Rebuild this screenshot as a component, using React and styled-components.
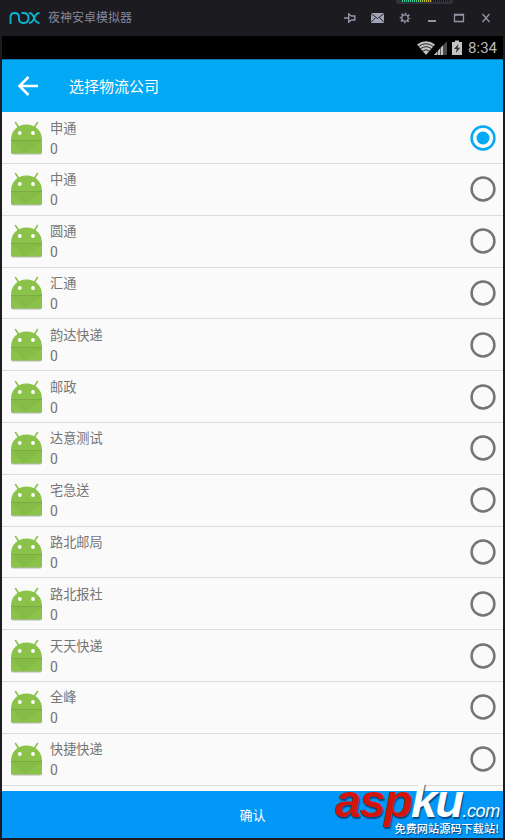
import React, { useState } from 'react';
import styled, { createGlobalStyle } from 'styled-components';

const companies = [
  '申通',
  '中通',
  '圆通',
  '汇通',
  '韵达快递',
  '邮政',
  '达意测试',
  '宅急送',
  '路北邮局',
  '路北报社',
  '天天快递',
  '全峰',
  '快捷快递',
];

const GlobalStyle = createGlobalStyle`
  body {
    margin: 0;
    background: #1c1b20;
    font-family: Roboto, "Noto Sans CJK SC", sans-serif;
  }

  * {
    box-sizing: border-box;
  }
`;

const Window = styled.div`
  position: relative;
  display: flex;
  flex-direction: column;
  width: 505px;
  height: 840px;
  padding: 0 2px 2px;
  overflow: hidden;
  background: #1c1b20;
`;

const TitleBar = styled.header`
  display: flex;
  align-items: center;
  flex: 0 0 36px;
  padding: 0 8px 0 7px;
`;

const WindowTitle = styled.span`
  flex: 1;
  margin-left: 8px;
  color: #85879a;
  font-size: 12px;
  line-height: 18px;
`;

const WindowButtons = styled.div`
  display: grid;
  grid-template-columns: 27px 28px 27px 27px 27px 15px;
  width: 151px;

  svg {
    display: block;
  }
`;

const Meter = styled.div`
  position: absolute;
  top: 0;
  left: 396px;
  width: 57px;
  height: 4px;
  border-radius: 0 0 3px 3px;
  background: #30333e;
`;

const MeterScale = styled.svg`
  display: block;
  margin-left: 6px;
`;

const StatusBar = styled.div`
  display: flex;
  align-items: center;
  justify-content: flex-end;
  flex: 0 0 23px;
  padding-right: 6px;
  background: #000;
`;

const Clock = styled.span`
  margin-left: 5px;
  padding-top: 2px;
  color: #b8b8b8;
  font-size: 15px;
  line-height: 21px;
`;

const AppBar = styled.div`
  display: flex;
  align-items: center;
  flex: 0 0 53px;
  padding-left: 15px;
  border-top: 1px solid #0879ae;
  background: #03a9f4;
`;

const AppTitle = styled.h1`
  margin: 1px 0 0 30px;
  color: #fff;
  font-size: 15px;
  font-weight: 400;
  line-height: 22px;
`;

const List = styled.ul`
  flex: 1;
  margin: 0;
  padding: 0.3px 0 0;
  overflow: hidden;
  background: #fafafa;
  list-style: none;
`;

const Row = styled.li`
  display: flex;
  align-items: center;
  height: 51.8px;
  padding: 0 7.5px 0 9px;
  border-bottom: 1px solid #dcdcdc;
`;

const RowText = styled.div`
  flex: 1;
  margin-left: 8px;
  padding-top: 2px;
  color: #757575;
  font-size: 13.2px;
  line-height: 21px;
`;

const Count = styled.div`
  font-size: 14px;
`;

const Radio = styled.button`
  display: flex;
  padding: 0;
  border: 0;
  background: none;
  color: ${({ $checked }) => ($checked ? '#03a9f4' : '#757575')};
`;

const ConfirmButton = styled.button`
  flex: 0 0 47px;
  padding: 0;
  border: 0;
  background: #0398f8;
  color: #fff;
  font-family: inherit;
  font-size: 13px;
`;

const Watermark = styled.div`
  position: absolute;
  right: 5px;
  bottom: 5px;
  width: 165px;
  height: 53px;
  color: #fff;
  white-space: nowrap;
`;

const Brand = styled.div`
  display: flex;
  align-items: baseline;
  height: 38px;
  font-family: "Liberation Sans", sans-serif;
  font-size: 47px;
  font-style: italic;
  font-weight: 700;
  line-height: 38px;
  letter-spacing: -1.7px;
  text-shadow: 1px 2px 1px rgba(0, 35, 75, 0.65);
`;

const BrandRed = styled.span`
  color: #d2140b;
`;

const BrandDomain = styled.span`
  font-size: 18px;
  font-weight: 400;
  letter-spacing: -0.4px;
`;

const Slogan = styled.div`
  position: absolute;
  right: 1px;
  bottom: 0;
  font-family: "Noto Sans CJK SC", sans-serif;
  font-size: 11.2px;
  font-weight: 500;
  line-height: 14px;
  text-shadow: 1px 1px 1px rgba(0, 35, 75, 0.75);
`;

function NoxLogo() {
  return (
    <svg width="31" height="12" viewBox="0 0 31 12" fill="none" stroke="#08b5cd" strokeWidth="1.9">
      <path d="M1.500 12V5.500C1.500 2.500 3 1 5.500 1S10 2.500 10 5.500V7c0 2.500 1.600 4 4 4h.6c3 0 4.900-2 4.900-5s-2-5-4.900-5H12.500" />
      <path d="M20 1c3 0 4 1.500 5.200 5S27.500 11 30.500 11M30.500 1c-3 0-4 1.500-5.300 5S23 11 20 11" />
    </svg>
  );
}

function PinIcon() {
  return (
    <svg width="12" height="12" viewBox="0 0 12 12" fill="none" stroke="#9295a8" strokeWidth="1.4">
      <path d="M0 6h4M4.700 1v10M4.700 2l2.800 2h3.300v4H7.500l-2.800 2" />
    </svg>
  );
}

function MailIcon() {
  return (
    <svg width="13" height="12" viewBox="0 0 13 12">
      <path fill="#a0a3b5" d="M0 1h13v10H0z" />
      <path fill="none" stroke="#292932" d="M0 1.500l6.500 5 6.500-5M0 10.500l4.500-5M13 10.500l-4.500-5" />
    </svg>
  );
}

function GearIcon() {
  return (
    <svg width="12" height="12" viewBox="0 0 12 12" fill="none" stroke="#9295a8">
      <circle cx="6" cy="6" r="3.200" strokeWidth="1.300" />
      <circle cx="6" cy="6" r="4.500" strokeWidth="1.700" strokeDasharray="1.600 1.934" strokeDashoffset="0.800" />
    </svg>
  );
}

function ControlIcon({ d, thin }) {
  return (
    <svg width="12" height="12" viewBox="0 0 12 12" fill="none" stroke="#9295a8" strokeWidth={thin ? 1.3 : 2}>
      <path d={d} />
    </svg>
  );
}

function WindowIcons() {
  return (
    <WindowButtons>
      <PinIcon />
      <MailIcon />
      <GearIcon />
      <ControlIcon d="M2 9h8" />
      <ControlIcon d="M1.500 2.500h9v7h-9zM1 3h10" thin />
      <ControlIcon d="M2.500 2l7 8M9.500 2l-7 8" thin />
    </WindowButtons>
  );
}

function StatusIcons() {
  return (
    <svg width="46" height="16" viewBox="0 0 46 16">
      <path fill="#c4c4c4" d="M0 4.500Q9 -2 18 4.500L9 15z" />
      <g fill="none" stroke="#000" strokeWidth=".8">
        <path d="M1.500 6.500Q9 1 16.500 6.500M3.500 8.700Q9 4.700 14.500 8.700M5.500 11Q9 8.500 12.500 11" />
      </g>
      <path fill="#4b4b4b" d="M30 1v14H17z" />
      <path fill="#c4c4c4" d="M26 5.300V15h-9z" />
      <path stroke="#000" strokeWidth=".5" d="M20.500 8v8M23.500 8v8" />
      <path fill="#c4c4c4" d="M35 2h3V.5h4V2h3v13H35z" />
      <path fill="#333" d="M41.500 4l-4.500 5h2.700l-.8 4 4.300-5.200h-2.600z" />
    </svg>
  );
}

function BackArrow() {
  return (
    <svg width="22" height="20" viewBox="0 0 22 20" fill="none" stroke="#fff" strokeWidth="2.500">
      <path d="M11.500 1L2.500 10l9 9M2.500 10H21" />
    </svg>
  );
}

function AndroidIcon() {
  return (
    <svg width="31" height="34" viewBox="0 0 31 34">
      <path stroke="#8bc34a" strokeWidth="1.600" strokeLinecap="round" d="M4.500 1.500l4 6M26.500 1.500l-4 6" />
      <path fill="#b8bab5" d="M0 20h31v11.500q0 2-2 2H2q-2 0-2-2z" />
      <path fill="#8bc34a" d="M0 19C0 10 6 3.500 15.500 3.500S31 10 31 19v11.500q0 2-2 2H2q-2 0-2-2z" />
      <path fill="#7caf42" opacity=".35" d="M0 19.500h31v1L12.500 32.500z" />
      <path stroke="#719f40" strokeWidth=".6" d="M0 19.500h31" />
      <circle cx="8.800" cy="12" r="1.900" fill="#fff" />
      <circle cx="22" cy="12" r="1.900" fill="#fff" />
    </svg>
  );
}

function RadioMark({ checked }) {
  return (
    <svg width="26" height="26" viewBox="0 0 26 26">
      <circle cx="13" cy="13" r="11.400" fill="none" stroke="currentColor" strokeWidth="2.500" />
      {checked && (<circle cx="13" cy="13" r="6.500" fill="currentColor" />)}
    </svg>
  );
}

function LevelMeter() {
  return (
    <Meter>
      <MeterScale width="48" height="2">
        <path stroke="#35cd96" strokeWidth="2" strokeDasharray="1 1" d="M0 1h15" />
        <path stroke="#a5cc50" strokeWidth="2" strokeDasharray="1 1" d="M16 1h8" />
        <path stroke="#e0bd32" strokeWidth="2" strokeDasharray="1 1" d="M24 1h6" />
        <path stroke="#15171d" strokeWidth="2" strokeDasharray="1 1" d="M30 1h17" />
      </MeterScale>
    </Meter>
  );
}

export default function App() {
  const [selected, setSelected] = useState(0);

  return (
    <Window>
      <GlobalStyle />

      <TitleBar>
        <NoxLogo />
        <WindowTitle>夜神安卓模拟器</WindowTitle>
        <WindowIcons />
      </TitleBar>
      <LevelMeter />

      <StatusBar>
        <StatusIcons />
        <Clock>8:34</Clock>
      </StatusBar>

      <AppBar>
        <BackArrow />
        <AppTitle>选择物流公司</AppTitle>
      </AppBar>

      <List>
        {companies.map((name, index) => (
          <Row key={name}>
            <AndroidIcon />
            <RowText>
              <div>{name}</div>
              <Count>0</Count>
            </RowText>
            <Radio
              type="button"
              aria-label={name}
              $checked={selected === index}
              onClick={() => setSelected(index)}
            >
              <RadioMark checked={selected === index} />
            </Radio>
          </Row>
        ))}
      </List>

      <ConfirmButton type="button">确认</ConfirmButton>

      <Watermark>
        <Brand>
          <BrandRed>asp</BrandRed>
          <span>ku</span>
          <BrandDomain>.com</BrandDomain>
        </Brand>
        <Slogan>免费网站源码下载站!</Slogan>
      </Watermark>
    </Window>
  );
}
